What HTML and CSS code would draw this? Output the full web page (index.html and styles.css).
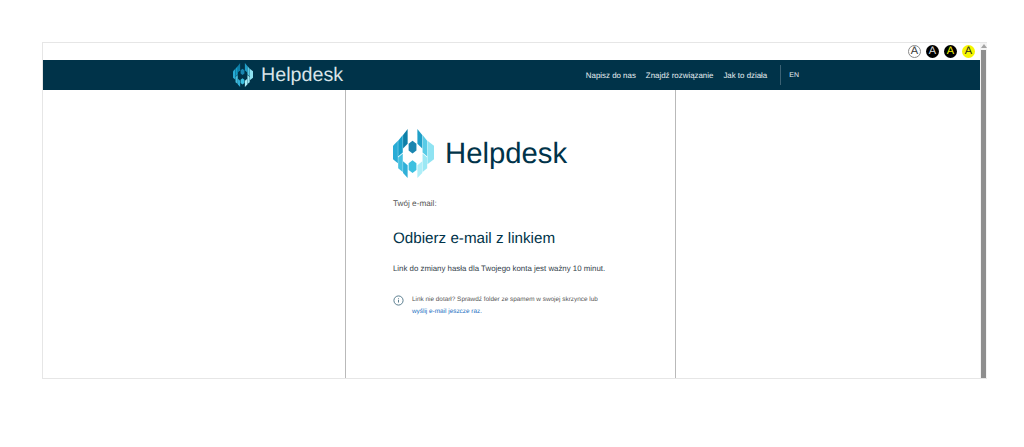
FILE: index.html
```html
<!DOCTYPE html>
<html lang="pl">
<head>
  <meta charset="UTF-8" />
  <meta name="viewport" content="width=device-width, initial-scale=1.0" />
  <title>Helpdesk</title>
  <link rel="stylesheet" href="styles.css">
</head>
<body>
  <!-- logo mark, reused in the nav and the panel -->
  <svg class="defs" width="0" height="0" aria-hidden="true">
    <symbol id="mark" viewBox="0 0 42 50">
      <polygon fill="#29acd6" points="0,17 5,12 5,35 0,31"/>
      <polygon fill="#16a0cb" points="5.3,12 10,6 10,24 5.3,28"/>
      <polygon fill="#45c0e0" points="5.3,29 10,25 10,44 5.3,40"/>
      <polygon fill="#0c7fa8" points="10.3,6 15,0 15,15 10.3,20"/>
      <polygon fill="#30b0d8" points="10.3,33 15,37 15,50 10.3,45"/>
      <polygon fill="#1a86b0" points="20,12 24,15 24,22 20,25 16,22 16,15"/>
      <polygon fill="#3dc0e0" points="20,32 24,35 24,42 20,45 16,42 16,35"/>
      <polygon fill="#1f9fc8" points="25,0 30,6 30,20 25,15"/>
      <polygon fill="#aeeef8" points="25,37 30,33 30,45 25,50"/>
      <polygon fill="#58cbe6" points="30.3,6 35,12 35,28 30.3,24"/>
      <polygon fill="#9be8f4" points="30.3,25 35,29 35,40 30.3,44"/>
      <polygon fill="#8fe3f2" points="35.3,12 42,17 42,31 35.3,36"/>
    </symbol>
  </svg>

  <div class="frame">
    <div class="page">
      <div class="contrast">
        <span class="a a-white">A</span>
        <span class="a a-black">A</span>
        <span class="a a-black-yellow">A</span>
        <span class="a a-yellow">A</span>
      </div>

      <nav class="nav">
        <a class="brand" href="#">
          <svg class="brand-mark"><use href="#mark"/></svg>
          <span>Helpdesk</span>
        </a>
        <div class="links">
          <a href="#">Napisz do nas</a>
          <a href="#">Znajdź rozwiązanie</a>
          <a href="#">Jak to działa</a>
          <a class="lang" href="#">EN</a>
        </div>
      </nav>

      <main class="columns">
        <div></div>
        <section class="panel">
          <div class="logo">
            <svg class="logo-mark"><use href="#mark"/></svg>
            <span>Helpdesk</span>
          </div>
          <p class="email">Twój e-mail:</p>
          <h1>Odbierz e-mail z linkiem</h1>
          <p class="valid">Link do zmiany hasła dla Twojego konta jest ważny 10 minut.</p>
          <div class="note">
            <svg class="info" viewBox="0 0 12 12">
              <circle cx="6" cy="6" r="5" fill="none" stroke="#4d7385" stroke-width="1"/>
              <path d="M6 5.2v3M6 3.6v.8" stroke="#4d7385" stroke-width="1"/>
            </svg>
            <p>Link nie dotarł? Sprawdź folder ze spamem w swojej skrzynce lub<br><a href="#">wyślij e-mail jeszcze raz.</a></p>
          </div>
        </section>
        <div></div>
      </main>
    </div>

    <div class="scrollbar">
      <span class="arrow"></span>
      <span class="thumb"></span>
    </div>
  </div>
</body>
</html>
```

FILE: styles.css
```css
:root {
  --navy: #003349;
  --line: #b9b9b9;
}
* { box-sizing: border-box; }
body {
  margin: 0;
  background: #fff;
  font-family: "Liberation Sans", Arial, sans-serif;
  color: #003349;
  text-rendering: geometricPrecision;
}
a { text-decoration: none; color: inherit; }
.defs { display: block; }

.frame {
  display: flex;
  width: 945px;
  height: 337px;
  margin: 42px 0 0 42px;
  border: 1px solid #e6e6e6;
  border-right: 0;
}
.page { flex: 1; display: flex; flex-direction: column; min-width: 0; }

/* contrast switches */
.contrast {
  display: flex;
  justify-content: flex-end;
  gap: 5px;
  height: 17px;
  padding: 2px 5px 0 0;
}
.a {
  width: 13px;
  height: 13px;
  border-radius: 50%;
  font-size: 11px;
  line-height: 13px;
  text-align: center;
}
.a-white { border: 1px solid #8a8a8a; color: #333; line-height: 11px; }
.a-black { background: #000; color: #ddd; }
.a-black-yellow { background: #000; color: #f5f500; }
.a-yellow { background: #f5f500; color: #222; }

/* nav */
.nav {
  display: flex;
  align-items: center;
  height: 30px;
  padding: 0 181px 0 190px;
  background: var(--navy);
  color: #e6eef1;
}
.brand { display: flex; align-items: center; gap: 8px; font-size: 19.7px; color: #d8e4e8; }
.brand-mark { width: 20px; height: 24px; }
.links { display: flex; align-items: center; gap: 10px; margin-left: auto; font-size: 7.9px; }
.lang {
  display: flex;
  align-items: center;
  height: 20px;
  margin-left: 3px;
  padding-left: 8px;
  border-left: 1px solid #3c6274;
  font-size: 7px;
}

/* columns */
.columns { flex: 1; display: grid; grid-template-columns: 302px 331px 1fr; }
.panel {
  padding: 39px 47px 0;
  border-left: 1px solid var(--line);
  border-right: 1px solid var(--line);
}
.logo { display: flex; align-items: center; gap: 11px; font-size: 29.3px; }
.logo-mark { width: 41px; height: 49px; }
.email { margin: 20px 0 0; font-size: 8.2px; line-height: 12px; color: #555; }
h1 { margin: 19px 0 0; font-size: 15.2px; font-weight: 400; line-height: 20px; }
.valid { margin: 14px 0 0; font-size: 7.87px; line-height: 12px; color: #33414a; }
.note { display: flex; gap: 8px; margin-top: 19px; }
.info { flex: none; width: 11px; height: 11px; margin-top: 1px; }
.note p { margin: 0; font-size: 6.4px; line-height: 12px; color: #555; }
.note a { color: #1b6fc2; }

/* fake scrollbar */
.scrollbar {
  flex: none;
  display: flex;
  flex-direction: column;
  align-items: center;
  width: 7px;
  background: #f4f4f4;
}
.arrow {
  margin-top: 1px;
  border: 3px solid transparent;
  border-top: 0;
  border-bottom: 4px solid #a3a3a3;
}
.thumb { flex: 1; width: 5px; margin-top: 2px; background: #8e8e8e; }
```
